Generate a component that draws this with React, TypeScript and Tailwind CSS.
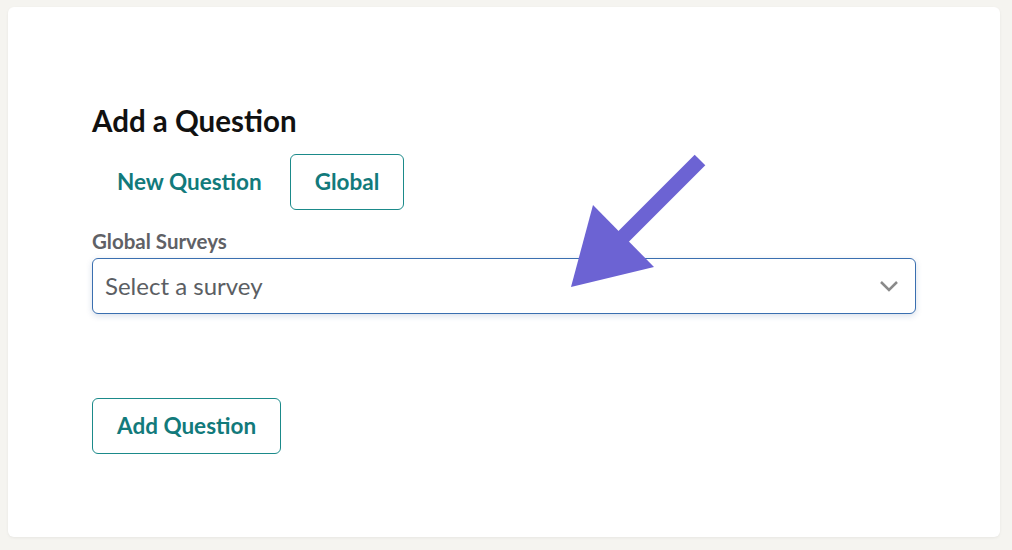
export default function App() {
    return (
        <div className="relative min-h-[550px] bg-[#f5f4f0] pt-[7px] pl-[8px] pr-[12px] pb-[13px] font-['Lato','Liberation_Sans',sans-serif]">
            <div className="h-[530px] rounded-[6px] bg-white pt-[98px] pl-[84px] pr-[84px] shadow-[0_1px_3px_rgba(0,0,0,0.06)]">
                <h2 className="text-[29.5px] font-bold leading-[32px] text-[#111]">Add a Question</h2>

                {/* ── Tabs ─────────────────────────────────────────── */}
                <div className="mt-[17px] flex gap-[3px]">
                    <button className="h-[56px] rounded-[6px] border border-transparent px-[24px] text-[22.5px] font-bold text-[#127a7b]">
                        New Question
                    </button>
                    <button className="h-[56px] rounded-[6px] border border-[#1b8a8a] px-[24px] text-[22.5px] font-bold text-[#127a7b]">
                        Global
                    </button>
                </div>

                {/* ── Survey select ────────────────────────────────── */}
                <label className="mt-[19px] block text-[20.5px] font-bold leading-[24px] text-[#5f6166]">Global Surveys</label>
                <div className="mt-[5px] flex h-[56px] w-[824px] items-center justify-between rounded-[6px] border border-[#3a6fb0] bg-white pl-[12px] pr-[16px] shadow-[0_2px_6px_rgba(40,80,140,0.18)]">
                    <span className="text-[24px] text-[#5b5e63]">Select a survey</span>
                    <svg width="20" height="12" viewBox="0 0 20 12" fill="none">
                        <path d="M2 2l8 8 8-8" stroke="#8a8a8a" strokeWidth="2.5" />
                    </svg>
                </div>

                <button className="mt-[84px] h-[56px] rounded-[6px] border border-[#1b8a8a] px-[24px] text-[22.5px] font-bold text-[#127a7b]">
                    Add Question
                </button>
            </div>

            {/* ── Annotation arrow ─────────────────────────────────── */}
            <svg className="pointer-events-none absolute left-0 top-0" width="1012" height="550">
                <line x1="700" y1="160" x2="622" y2="238" stroke="#6c63d3" strokeWidth="15" />
                <polygon points="571,287 593,205 654,267" fill="#6c63d3" />
            </svg>
        </div>
    );
}
